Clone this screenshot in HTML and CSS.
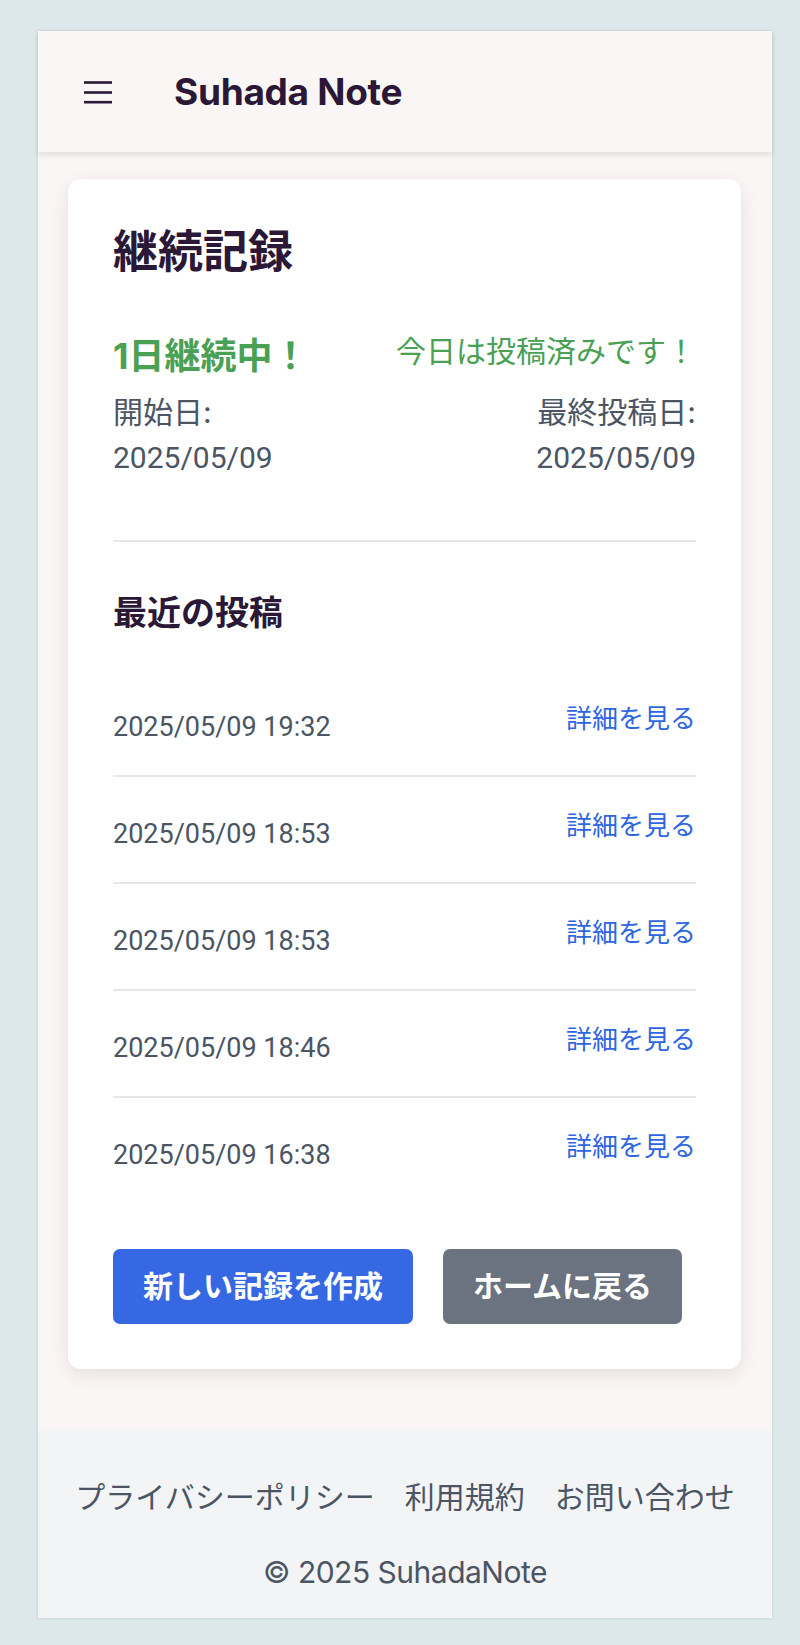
FILE: index.html
```html
<!DOCTYPE html>
<html lang="ja">

<head>
    <meta charset="utf-8">
    <meta name="viewport" content="width=device-width, initial-scale=1.0">
    <title>継続記録 - Suhada Note</title>
    <link rel="stylesheet" href="styles.css">
</head>

<body>
    <div class="app">
        <header class="topbar">
            <button class="menu-button" aria-label="メニュー">
                <svg width="28" height="24" viewBox="0 0 28 24">
                    <line x1="0" y1="2.5" x2="28" y2="2.5" />
                    <line x1="0" y1="12.5" x2="28" y2="12.5" />
                    <line x1="0" y1="22.2" x2="28" y2="22.2" />
                </svg>
            </button>
            <div class="brand">Suhada Note</div>
        </header>

        <main class="content">
            <section class="card">
                <h1 class="card-title">継続記録</h1>

                <div class="streak">
                    <div class="streak-count">1日継続中！</div>
                    <div class="streak-status">今日は投稿済みです！</div>
                </div>

                <div class="streak-dates">
                    <div>
                        <div>開始日:</div>
                        <div class="num">2025/05/09</div>
                    </div>
                    <div class="align-right">
                        <div>最終投稿日:</div>
                        <div class="num">2025/05/09</div>
                    </div>
                </div>

                <hr class="divider">

                <h2 class="section-title">最近の投稿</h2>

                <ul class="post-list">
                    <li class="post-row">
                        <span class="post-date num">2025/05/09 19:32</span>
                        <a class="post-link" href="#">詳細を見る</a>
                    </li>
                    <li class="post-row">
                        <span class="post-date num">2025/05/09 18:53</span>
                        <a class="post-link" href="#">詳細を見る</a>
                    </li>
                    <li class="post-row">
                        <span class="post-date num">2025/05/09 18:53</span>
                        <a class="post-link" href="#">詳細を見る</a>
                    </li>
                    <li class="post-row">
                        <span class="post-date num">2025/05/09 18:46</span>
                        <a class="post-link" href="#">詳細を見る</a>
                    </li>
                    <li class="post-row">
                        <span class="post-date num">2025/05/09 16:38</span>
                        <a class="post-link" href="#">詳細を見る</a>
                    </li>
                </ul>

                <div class="actions">
                    <a class="btn btn-primary" href="#">新しい記録を作成</a>
                    <a class="btn btn-secondary" href="#">ホームに戻る</a>
                </div>
            </section>
        </main>

        <footer class="footer">
            <nav class="footer-links">
                <a href="#">プライバシーポリシー</a>
                <a href="#">利用規約</a>
                <a href="#">お問い合わせ</a>
            </nav>
            <p class="copyright">© 2025 SuhadaNote</p>
        </footer>
    </div>
</body>

</html>
```

FILE: styles.css
```css
body {
    margin: 0;
    padding: 31px 28px 27px 38px;
    background: #dce8e9;
    font-family: 'Inter', 'Noto Sans CJK JP', sans-serif;
    color: #4b5563;
}

.app {
    background: #faf6f5;
    box-shadow: 0 0 3px rgba(0, 0, 0, 0.12);
}

/* dates and times read narrower than Inter */
.num {
    font-family: 'Roboto', 'Noto Sans CJK JP', sans-serif;
}

/* header */
.topbar {
    height: 121px;
    padding: 0 46px;
    display: flex;
    align-items: center;
    gap: 62px;
    background: #faf6f5;
    box-shadow: 0 3px 6px rgba(0, 0, 0, 0.1);
    position: relative;
}

.menu-button {
    border: 0;
    padding: 0;
    background: none;
    display: flex;
}

.menu-button line {
    stroke: #2a1836;
    stroke-width: 2.6;
}

.brand {
    font-size: 37px;
    font-weight: 700;
    color: #2a1836;
    letter-spacing: -0.3px;
}

/* main card */
.content {
    padding: 27px 31px 61px 30px;
}

.card {
    background: #fff;
    border-radius: 13px;
    padding: 45px;
    box-shadow: 0 6px 18px rgba(60, 40, 40, 0.1);
}

.card-title {
    margin: 0 0 49px;
    font-size: 45px;
    line-height: 56px;
    font-weight: 700;
    color: #2a1836;
}

.streak {
    display: flex;
    justify-content: space-between;
    align-items: flex-start;
    margin-bottom: 7px;
    color: #4aa055;
}

.streak-count {
    font-size: 36px;
    line-height: 54px;
    font-weight: 700;
}

.streak-status {
    font-size: 30px;
    line-height: 45px;
}

.streak-dates {
    display: flex;
    justify-content: space-between;
    font-size: 30px;
    line-height: 45px;
}

.align-right {
    text-align: right;
}

.divider {
    border: 0;
    border-top: 2px solid #e7e7eb;
    margin: 60px 0 46px;
}

.section-title {
    margin: 0 0 32px;
    font-size: 34px;
    line-height: 50px;
    font-weight: 700;
    color: #2a1836;
}

/* recent posts */
.post-list {
    list-style: none;
    margin: 0;
    padding: 0;
}

.post-row {
    display: flex;
    justify-content: space-between;
    align-items: flex-start;
    padding: 29px 0 28px;
    border-bottom: 2px solid #e7e7eb;
    font-size: 27px;
    line-height: 40px;
}

.post-row:last-child {
    border-bottom: 0;
}

.post-date {
    margin-top: 8px;
}

.post-link {
    color: #2e66e2;
    font-size: 26px;
    text-decoration: none;
}

.actions {
    display: flex;
    gap: 30px;
    margin-top: 46px;
}

.btn {
    padding: 15px 30px;
    border-radius: 7px;
    font-size: 30px;
    line-height: 45px;
    font-weight: 700;
    color: #fff;
    text-decoration: none;
}

.btn-primary {
    background: #3568e2;
}

.btn-secondary {
    background: #6b7280;
}

/* footer */
.footer {
    background: #f2f4f6;
    padding: 45px 0 23px;
    text-align: center;
    font-size: 30px;
    line-height: 45px;
}

.footer-links {
    display: flex;
    justify-content: center;
    gap: 30px;
}

.footer-links a {
    color: #4b5563;
    text-decoration: none;
}

.copyright {
    margin: 30px 0 0;
    letter-spacing: -0.5px;
}
```
